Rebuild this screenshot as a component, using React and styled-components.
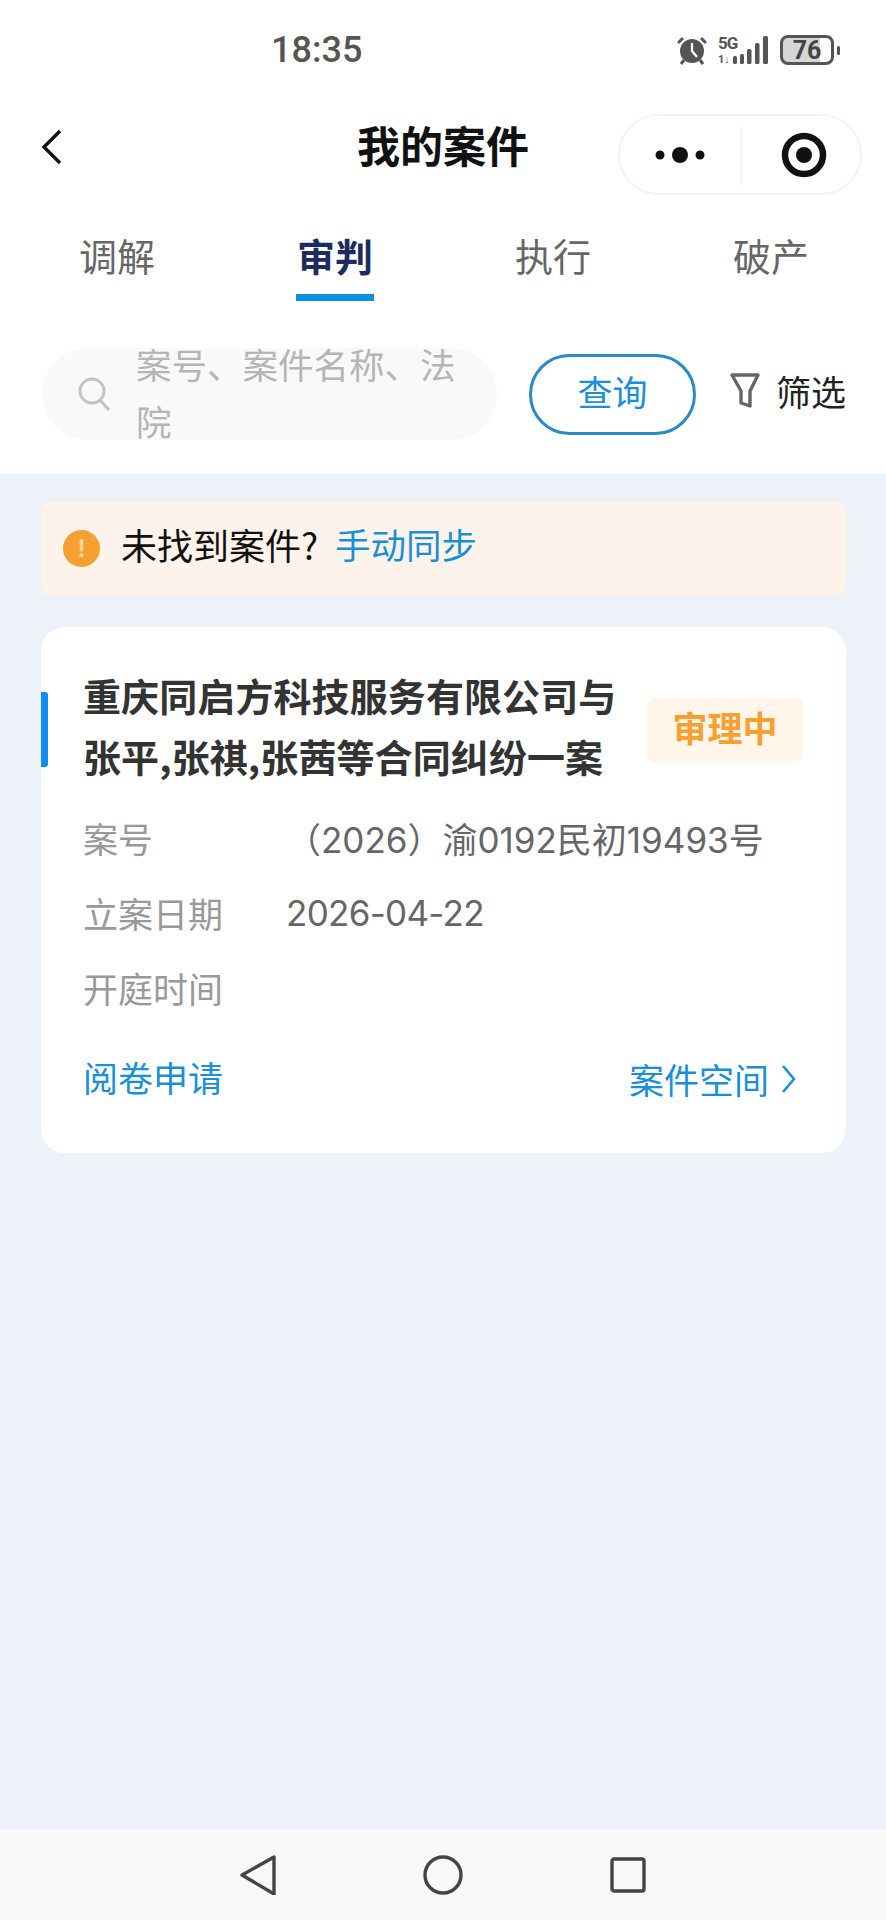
import React from "react";
import styled, { createGlobalStyle } from "styled-components";

const GlobalStyle = createGlobalStyle`
  html, body {
    margin: 0;
    padding: 0;
    background: #fff;
  }
  * {
    box-sizing: border-box;
  }
`;

const CJK = `"Noto Sans CJK SC", "Noto Sans", sans-serif`;

const Page = styled.div`
  width: 886px;
  height: 1920px;
  display: flex;
  flex-direction: column;
  font-family: ${CJK};
  overflow: hidden;
`;

const Header = styled.header`
  background: #fff;
`;

const StatusBar = styled.div`
  height: 100px;
  display: flex;
  align-items: center;
  justify-content: space-between;
  padding: 0 52px 0 271px;
`;
const Clock = styled.span`
  font-family: Roboto, "Liberation Sans", sans-serif;
  font-size: 36px;
  font-weight: 500;
  color: #555;
`;
const StatusIcons = styled.div`
  display: flex;
  align-items: center;
  gap: 11px;
`;
const Network = styled.div`
  position: relative;
  width: 51px;
  height: 30px;
`;
const NetworkType = styled.span`
  position: absolute;
  left: 0;
  top: 0;
  font-family: Roboto, "Liberation Sans", sans-serif;
  font-size: 17px;
  line-height: 17px;
  letter-spacing: -1px;
  font-weight: 700;
  color: #555;
`;
const NetworkSlot = styled.span`
  position: absolute;
  left: 0;
  bottom: 0;
  font-family: Roboto, "Liberation Sans", sans-serif;
  font-size: 11px;
  line-height: 11px;
  font-weight: 700;
  color: #555;
`;
const Battery = styled.div`
  position: relative;
  width: 54px;
  height: 30px;
  border: 3px solid #555;
  border-radius: 8px;
  background: linear-gradient(to right, #d6d6d6 78%, #fff 78%);
  display: flex;
  align-items: center;
  justify-content: center;
  font-family: Roboto, "Liberation Sans", sans-serif;
  font-size: 25px;
  font-weight: 700;
  color: #444;
  &::after {
    content: "";
    position: absolute;
    right: -9px;
    top: 8px;
    width: 3px;
    height: 9px;
    background: #555;
    border-radius: 2px;
  }
`;

const NavBar = styled.div`
  height: 106px;
  display: grid;
  grid-template-columns: 1fr auto 1fr;
  padding: 0 24px;
`;
const BackButton = styled.svg`
  width: 21px;
  height: 36px;
  margin: 29px 0 0 17px;
`;
const Title = styled.h1`
  margin: 21px 0 0;
  font-size: 43px;
  line-height: 46px;
  font-weight: 700;
  color: #111;
`;
const Capsule = styled.div`
  justify-self: end;
  margin-top: 14px;
  width: 244px;
  height: 81px;
  border: 2px solid #f3f3f3;
  border-radius: 41px;
  display: grid;
  grid-template-columns: 1fr 1fr;
  align-items: center;
`;
const CapsuleSlot = styled.div`
  height: 60px;
  display: flex;
  align-items: center;
  justify-content: center;
  border-left: ${(p) => (p.$divided ? "2px solid #f8f8f8" : "none")};
  padding-left: ${(p) => (p.$divided ? "6px" : "0")};
`;

const Tabs = styled.nav`
  display: grid;
  grid-template-columns: repeat(4, 218px);
  padding: 0 6px 0 8px;
`;
const Tab = styled.div`
  display: flex;
  justify-content: center;
  padding-top: 29px;
`;
const TabLabel = styled.span`
  width: 78px;
  text-align: center;
  font-size: 38px;
  line-height: 40px;
  padding-bottom: 19px;
  font-weight: ${(p) => (p.$active ? 700 : 400)};
  color: ${(p) => (p.$active ? "#1a2d5e" : "#666")};
  border-bottom: 7px solid ${(p) => (p.$active ? "#0e8fe0" : "transparent")};
  white-space: nowrap;
`;

const SearchRow = styled.div`
  display: flex;
  align-items: center;
  padding: 47px 0 34px 42px;
`;
const SearchBox = styled.div`
  width: 455px;
  height: 92px;
  background: #f9f9f9;
  border-radius: 46px;
  display: flex;
  align-items: center;
  padding-left: 36px;
  gap: 26px;
`;
const Placeholder = styled.div`
  width: 330px;
  margin-top: -4px;
  font-size: 35.5px;
  line-height: 57px;
  color: #b5b5b5;
`;
const QueryButton = styled.button`
  margin-left: 32px;
  width: 167px;
  height: 81px;
  border: 3px solid #2a8ac6;
  border-radius: 41px;
  background: #fff;
  font-family: inherit;
  font-size: 35px;
  line-height: 40px;
  color: #1a8fd8;
  padding: 0 0 6px;
`;
const Filter = styled.div`
  margin-left: 34px;
  display: flex;
  align-items: center;
  gap: 16px;
  font-size: 35px;
  line-height: 40px;
  color: #222;
  padding-bottom: 6px;
  white-space: nowrap;
`;

const Main = styled.main`
  flex: 1;
  background: #edf1f8;
  padding: 28px 40px 0 41px;
`;
const Notice = styled.div`
  height: 93px;
  background: #fdf3ea;
  border-radius: 8px;
  display: flex;
  align-items: center;
  padding: 0 0 10px 22px;
  font-size: 36px;
  color: #111;
`;
const NoticeIcon = styled.span`
  width: 37px;
  height: 37px;
  margin: 10px 21px 0 0;
  border-radius: 50%;
  background: #f5a030;
  color: #fbd39b;
  font-family: "Liberation Sans", sans-serif;
  font-size: 26px;
  font-weight: 700;
  display: flex;
  align-items: center;
  justify-content: center;
`;
const BlueLink = styled.span`
  color: #1a8fd8;
  font-size: ${(p) => p.$size || 35}px;
  line-height: 44px;
  margin-top: ${(p) => p.$offset || 0}px;
  margin-left: ${(p) => p.$indent || 0}px;
  display: inline-flex;
  align-items: center;
  gap: 12px;
`;

const Card = styled.section`
  position: relative;
  margin-top: 32px;
  background: #fff;
  border-radius: 24px;
  padding: 37px 43px 52px 42px;
`;
const AccentBar = styled.span`
  position: absolute;
  left: 0;
  top: 65px;
  width: 7px;
  height: 75px;
  background: #0f8fef;
  border-radius: 0 3px 3px 0;
`;
const CardHead = styled.div`
  display: flex;
  align-items: center;
`;
const CaseTitle = styled.h2`
  flex: none;
  width: 545px;
  margin: 0;
  font-size: 38px;
  line-height: 61px;
  letter-spacing: 0.1px;
  font-weight: 700;
  color: #333;
`;
const Badge = styled.span`
  flex: none;
  margin: 10px 0 0 19px;
  width: 156px;
  height: 64px;
  background: #fff5e8;
  border-radius: 8px;
  display: flex;
  align-items: center;
  justify-content: center;
  padding-bottom: 8px;
  font-size: 35px;
  font-weight: 700;
  color: #f5a030;
  white-space: nowrap;
`;
const InfoList = styled.div`
  margin-top: 14px;
`;
const InfoRow = styled.div`
  height: 75px;
  display: grid;
  grid-template-columns: 203px 1fr;
  align-items: center;
  font-size: 35px;
`;
const InfoLabel = styled.span`
  color: #999;
`;
const InfoValue = styled.span`
  font-family: Inter, ${CJK};
  color: #666;
  white-space: nowrap;
  letter-spacing: ${(p) => p.$tracking || 0}px;
`;
const CardFoot = styled.div`
  margin-top: 30px;
  padding-right: 7px;
  display: flex;
  justify-content: space-between;
  align-items: flex-start;
`;

const SystemBar = styled.footer`
  height: 91px;
  background: #f8f8f8;
  display: flex;
  align-items: center;
  justify-content: center;
  gap: 145px;
`;

const rows = [
  { label: "案号", value: "（2026）渝0192民初19493号" },
  { label: "立案日期", value: "2026-04-22", tracking: -0.7 },
  { label: "开庭时间", value: "" },
];
const tabs = ["调解", "审判", "执行", "破产"];

const AlarmIcon = () => (
  <svg width="30" height="30" viewBox="0 0 30 30">
    <circle cx="15" cy="16" r="12" fill="#555" />
    <path d="M15 8v8l5 6" stroke="#fff" strokeWidth="2.2" fill="none" />
    <path d="M1 8l5-5M29 8l-5-5" stroke="#555" strokeWidth="3" />
    <path d="M7 25l-3 4M23 25l3 4" stroke="#555" strokeWidth="3" />
  </svg>
);

const SignalBars = () => (
  <svg width="51" height="30" viewBox="0 0 51 30">
    <rect x="15" y="21" width="4" height="8" rx="1.5" fill="#555" />
    <rect x="22" y="19" width="4" height="10" rx="1.5" fill="#555" />
    <rect x="29" y="14" width="4.5" height="15" rx="1.5" fill="#555" />
    <rect x="37" y="8" width="4.5" height="21" rx="1.5" fill="#555" />
    <rect x="45" y="1" width="5" height="28" rx="1.5" fill="#555" />
  </svg>
);

const App = () => {
  return (
    <Page>
      <GlobalStyle />
      <Header>
        <StatusBar>
          <Clock>18:35</Clock>
          <StatusIcons>
            <AlarmIcon />
            <Network>
              <SignalBars />
              <NetworkType>5G</NetworkType>
              <NetworkSlot>1↓</NetworkSlot>
            </Network>
            <Battery>76</Battery>
          </StatusIcons>
        </StatusBar>
        <NavBar>
          <BackButton viewBox="0 0 21 36">
            <path d="M19 2L3 18l16 16" fill="none" stroke="#111" strokeWidth="3.4" />
          </BackButton>
          <Title>我的案件</Title>
          <Capsule>
            <CapsuleSlot>
              <svg width="50" height="20" viewBox="0 0 50 20">
                <circle cx="5" cy="10" r="4.5" fill="#111" />
                <circle cx="25" cy="10" r="8" fill="#111" />
                <circle cx="45" cy="10" r="4.5" fill="#111" />
              </svg>
            </CapsuleSlot>
            <CapsuleSlot $divided>
              <svg width="46" height="46" viewBox="0 0 46 46">
                <circle cx="23" cy="23" r="19" fill="none" stroke="#111" strokeWidth="6.5" />
                <circle cx="23" cy="23" r="8" fill="#111" />
              </svg>
            </CapsuleSlot>
          </Capsule>
        </NavBar>
        <Tabs>
          {tabs.map((name) => (
            <Tab key={name}>
              <TabLabel $active={name === "审判"}>{name}</TabLabel>
            </Tab>
          ))}
        </Tabs>
        <SearchRow>
          <SearchBox>
            <svg width="32" height="34" viewBox="0 0 32 34">
              <circle cx="14" cy="14" r="12" fill="none" stroke="#c4c4c4" strokeWidth="3" />
              <path d="M22 23l9 10" stroke="#c4c4c4" strokeWidth="3" />
            </svg>
            <Placeholder>案号、案件名称、法院</Placeholder>
          </SearchBox>
          <QueryButton>查询</QueryButton>
          <Filter>
            <svg width="30" height="36" viewBox="0 0 30 36">
              <path
                d="M2 2h26L20 18v15l-9-3V18z"
                fill="none"
                stroke="#666"
                strokeWidth="3.4"
                strokeLinejoin="round"
              />
            </svg>
            筛选
          </Filter>
        </SearchRow>
      </Header>
      <Main>
        <Notice>
          <NoticeIcon>!</NoticeIcon>
          未找到案件?
          <BlueLink $indent={17} $size={35.5}>手动同步</BlueLink>
        </Notice>
        <Card>
          <AccentBar />
          <CardHead>
            <CaseTitle>重庆同启方科技服务有限公司与张平,张祺,张茜等合同纠纷一案</CaseTitle>
            <Badge>审理中</Badge>
          </CardHead>
          <InfoList>
            {rows.map((row) => (
              <InfoRow key={row.label}>
                <InfoLabel>{row.label}</InfoLabel>
                <InfoValue $tracking={row.tracking}>{row.value}</InfoValue>
              </InfoRow>
            ))}
          </InfoList>
          <CardFoot>
            <BlueLink>阅卷申请</BlueLink>
            <BlueLink $offset={2}>
              案件空间
              <svg width="15" height="30" viewBox="0 0 15 30">
                <path d="M2 2l11 13L2 28" fill="none" stroke="#1a8fd8" strokeWidth="2.6" />
              </svg>
            </BlueLink>
          </CardFoot>
        </Card>
      </Main>
      <SystemBar>
        <svg width="40" height="40" viewBox="0 0 40 40">
          <path
            d="M4 20L36 2v37z"
            fill="none"
            stroke="#444"
            strokeWidth="3.4"
            strokeLinejoin="round"
          />
        </svg>
        <svg width="40" height="40" viewBox="0 0 40 40">
          <circle cx="20" cy="20" r="18" fill="none" stroke="#444" strokeWidth="3.4" />
        </svg>
        <svg width="40" height="40" viewBox="0 0 40 40">
          <rect x="4" y="4" width="32" height="32" rx="2" fill="none" stroke="#444" strokeWidth="3.4" />
        </svg>
      </SystemBar>
    </Page>
  );
};

export default App;
